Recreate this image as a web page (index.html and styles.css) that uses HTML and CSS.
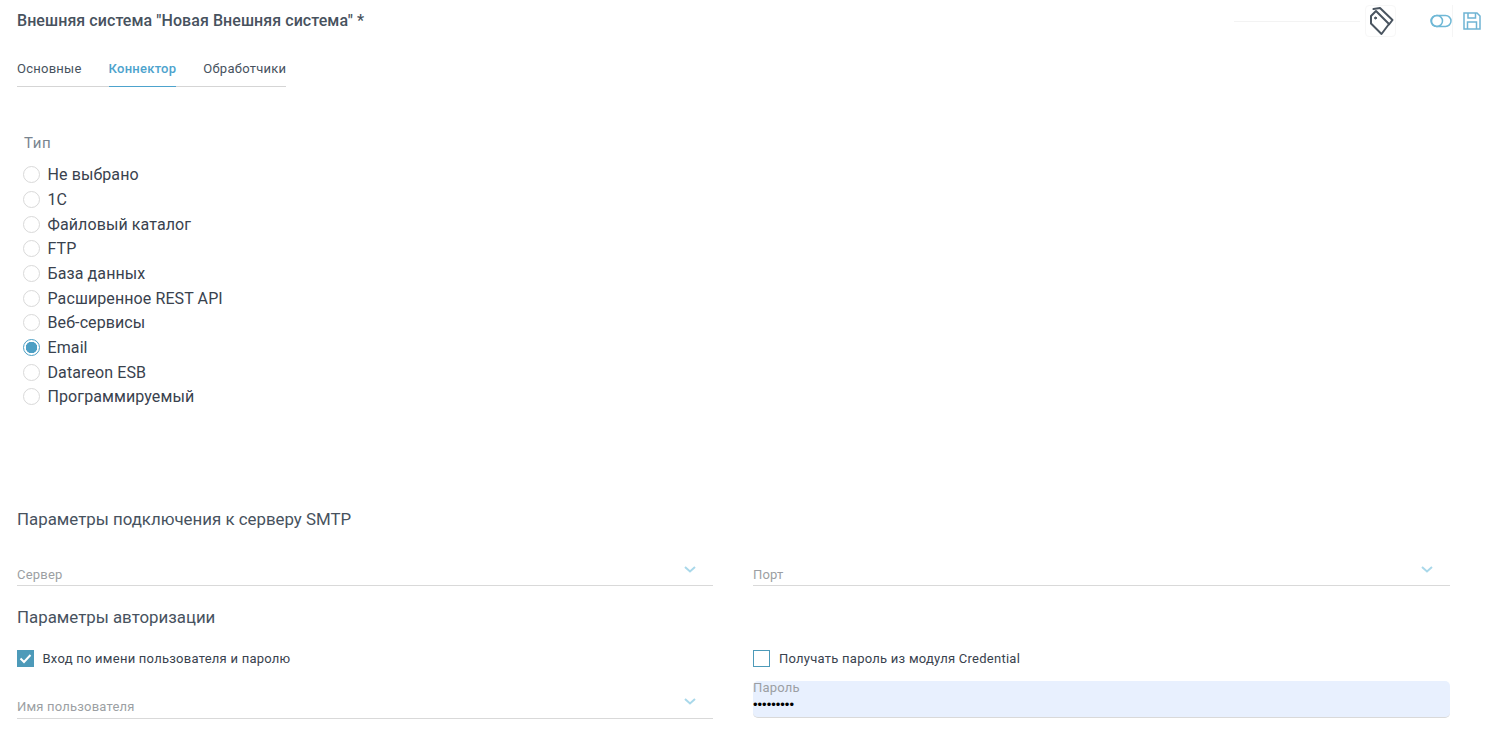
FILE: index.html
```html
<!DOCTYPE html>
<html lang="ru">
<head>
<meta charset="utf-8">
<title>Внешняя система</title>
<link rel="stylesheet" href="styles.css">
</head>
<body>
<div class="page">
  <header class="header">
    <h1 class="title">Внешняя система "Новая Внешняя система" *</h1>
    <div class="actions">
      <div class="rule"></div>
      <div class="tagbox">
        <svg class="tag" width="29" height="30" viewBox="1367 6 29 30" fill="none" stroke="#4a5560" stroke-width="2" stroke-linejoin="round" stroke-linecap="round">
          <path d="M1372 16 L1377 11 L1390 24 L1382.5 34 L1372 23.5 Z"/>
          <path d="M1374.5 9 L1381 8 L1393.5 20 L1390 24.5"/>
          <circle cx="1376.5" cy="18" r="1" fill="#4a5560" stroke-width="1"/>
        </svg>
      </div>
      <svg class="toggle" width="22" height="14" viewBox="0 0 22 14" fill="none" stroke="#6fb8d6" stroke-width="1.5">
        <rect x="1" y="1.5" width="20" height="11" rx="5.5"/>
        <circle cx="7" cy="7" r="5.5"/>
      </svg>
      <div class="sep"></div>
      <svg class="save" width="18" height="18" viewBox="0 0 18 18" fill="none" stroke="#6fb4d4" stroke-width="1.5">
        <path d="M1 1 H14 L17 4 V17 H1 Z"/>
        <path d="M5 1 V6 H12.5 V1"/>
        <path d="M4.5 17 V10 H13.5 V17"/>
      </svg>
    </div>
  </header>

  <nav class="tabs">
    <a class="tab">Основные</a>
    <a class="tab tab-active">Коннектор</a>
    <a class="tab">Обработчики</a>
  </nav>

  <section class="type-group">
    <div class="group-label">Тип</div>
    <ul class="radios">
      <li class="radio-row"><span class="radio"></span>Не выбрано</li>
      <li class="radio-row"><span class="radio"></span>1С</li>
      <li class="radio-row"><span class="radio"></span>Файловый каталог</li>
      <li class="radio-row"><span class="radio"></span>FTP</li>
      <li class="radio-row"><span class="radio"></span>База данных</li>
      <li class="radio-row"><span class="radio"></span>Расширенное REST API</li>
      <li class="radio-row"><span class="radio"></span>Веб-сервисы</li>
      <li class="radio-row"><span class="radio radio-on"></span>Email</li>
      <li class="radio-row"><span class="radio"></span>Datareon ESB</li>
      <li class="radio-row"><span class="radio"></span>Программируемый</li>
    </ul>
  </section>

  <h2 class="section-title smtp">Параметры подключения к серверу SMTP</h2>
  <div class="fields">
    <div class="field"><span class="field-label">Сервер</span><svg class="chev" width="12" height="7" viewBox="0 0 12 7" fill="none" stroke="#a9d8ea" stroke-width="2"><path d="M1 1 L6 5.5 L11 1"/></svg></div>
    <div class="field"><span class="field-label">Порт</span><svg class="chev" width="12" height="7" viewBox="0 0 12 7" fill="none" stroke="#a9d8ea" stroke-width="2"><path d="M1 1 L6 5.5 L11 1"/></svg></div>
  </div>

  <h2 class="section-title auth">Параметры авторизации</h2>
  <div class="fields checks">
    <label class="check-row"><span class="check check-on"><svg width="13" height="11" viewBox="0 0 13 11" fill="none" stroke="#fff" stroke-width="2"><path d="M1.5 5.5 L5 9 L11.5 2"/></svg></span>Вход по имени пользователя и паролю</label>
    <label class="check-row"><span class="check"></span>Получать пароль из модуля Credential</label>
  </div>
  <div class="fields last">
    <div class="field"><span class="field-label">Имя пользователя</span><svg class="chev" width="12" height="7" viewBox="0 0 12 7" fill="none" stroke="#a9d8ea" stroke-width="2"><path d="M1 1 L6 5.5 L11 1"/></svg></div>
    <div class="password">
      <span class="password-label">Пароль</span>
      <span class="password-dots">•••••••••</span>
    </div>
  </div>
</div>
</body>
</html>
```

FILE: styles.css
```css
* { box-sizing: border-box; }
html, body { margin: 0; padding: 0; background: #fff; overflow: hidden; }
body { font-family: Roboto, "Noto Sans", sans-serif; color: #39424e; }
.page { height: 733px; padding: 0 35px 0 17px; }

.header { display: flex; justify-content: space-between; align-items: flex-start; height: 58px; }
.title { margin: 12px 0 0; font-size: 16px; line-height: 18px; font-weight: 500; letter-spacing: 0.07px; color: #47525e; }
.actions { display: flex; align-items: center; height: 34px; margin: 4px -35px 0 0; }
.rule { width: 126px; height: 1px; background: #f3f3f3; margin: 0 5px 0 0; }
.tagbox { width: 31px; height: 32px; display: flex; align-items: center; justify-content: center; border: 1px solid #f7f7f7; border-radius: 4px; }
.toggle { margin-left: 34px; }
.sep { width: 1px; height: 32px; background: #f5f5f5; }
.save { margin-left: 10px; margin-right: 4px; }

.tabs { display: inline-flex; gap: 27px; height: 29px; border-bottom: 1px solid #d5d5d5; }
.tab { font-size: 13px; line-height: 22px; color: #47525e; letter-spacing: 0.25px; height: 29px; }
.tab-active { color: #4da3cd; font-weight: 500; border-bottom: 1px solid #4da3cd; }

.type-group { padding: 46px 0 0 7px; }
.group-label { font-size: 15px; line-height: 20px; color: #78848f; letter-spacing: 0.6px; margin-bottom: 9.3px; }
.radios { list-style: none; margin: 0 0 0 -1px; padding: 0; }
.radio-row { display: flex; align-items: center; height: 24.7px; font-size: 16px; letter-spacing: 0.1px; color: #39424e; }
.radio { width: 17px; height: 17px; border: 1px solid #d9d9d9; border-radius: 50%; margin-right: 7.5px; flex: none; background: #fff; }
.radio-on { border-color: #4d9fc4; background: radial-gradient(circle, #4d9fc4 0 5.5px, #fff 6px); }

.section-title { margin: 0; font-weight: 400; font-size: 16.85px; line-height: 20px; color: #47525e; }
.smtp { margin-top: 99.7px; }
.auth { margin-top: 21px; }

.fields { display: grid; grid-template-columns: 696px 697px; column-gap: 40px; }
.field { position: relative; height: 37px; border-bottom: 1px solid #d9d9d9; display: flex; align-items: flex-end; justify-content: space-between; }
.field-label { font-size: 13px; line-height: 20px; color: #9c9fa3; letter-spacing: 0.2px; }
.chev { position: absolute; right: 17px; top: 17px; }

.smtp + .fields { margin-top: 20px; }
.checks { margin-top: 23px; }
.check-row { display: flex; align-items: center; font-size: 13px; line-height: 18px; color: #39424e; letter-spacing: 0.25px; height: 18px; }
.check { width: 17px; height: 17px; border: 1px solid #4d9ab9; margin-right: 9px; flex: none; display: flex; align-items: center; justify-content: center; }
.check-on { background: #4d9ab9; margin-right: 8.5px; }

.last { margin-top: 13px; align-items: start; }
.last .field { height: 38px; padding-bottom: 1px; }
.password { height: 37px; background: #e8f0fe; border-bottom: 1px solid #d9d9d9; border-radius: 5px; display: flex; flex-direction: column; }
.password-label { font-size: 13px; line-height: 14px; color: #9c9fa3; letter-spacing: 0.2px; }
.password-dots { font-size: 13px; line-height: 16px; margin-top: 2px; color: #000; font-family: "Liberation Sans", sans-serif; }
```
